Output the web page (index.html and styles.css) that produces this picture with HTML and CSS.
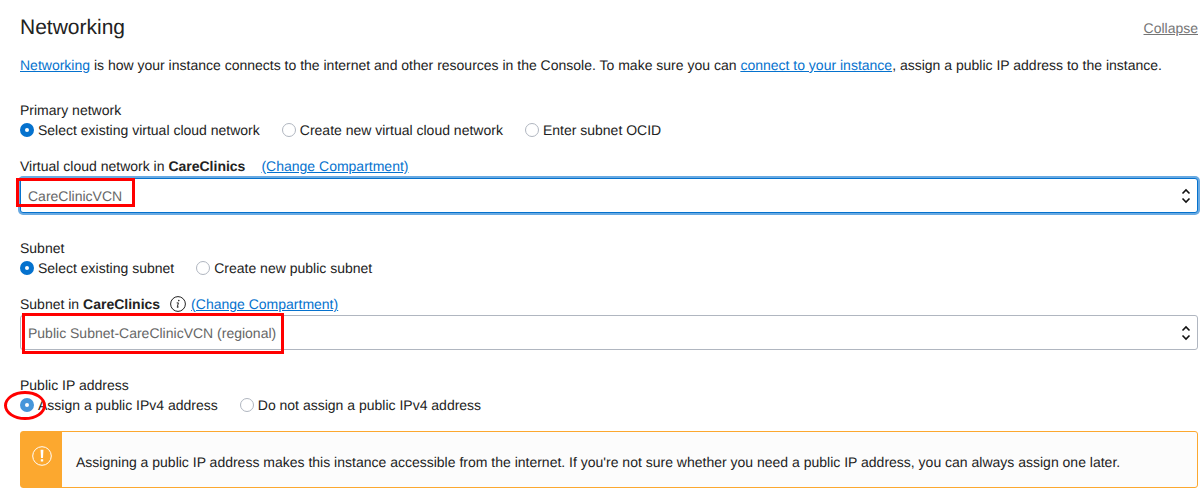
FILE: index.html
```html
<!DOCTYPE html>
<html lang="en">
<head>
<meta charset="utf-8">
<title>Networking</title>
<link rel="stylesheet" href="styles.css">
</head>
<body>
<main class="panel">
  <header class="panel-header">
    <h2 class="title">Networking</h2>
    <a class="collapse" href="#">Collapse</a>
  </header>
  <p class="intro"><a href="#">Networking</a> is how your instance connects to the internet and other resources in the Console. To make sure you can <a href="#">connect to your instance</a>, assign a public IP address to the instance.</p>

  <section class="group">
    <fieldset class="choices">
      <legend>Primary network</legend>
      <div class="options">
        <label class="option"><input type="radio" name="vcn" checked>Select existing virtual cloud network</label>
        <label class="option"><input type="radio" name="vcn">Create new virtual cloud network</label>
        <label class="option"><input type="radio" name="vcn">Enter subnet OCID</label>
      </div>
    </fieldset>
    <div class="field-label">
      <label for="vcn-select">Virtual cloud network in <b>CareClinics</b></label>
      <a class="change" href="#">(Change Compartment)</a>
    </div>
    <div class="select-box">
      <select id="vcn-select" class="select focused"><option>CareClinicVCN</option></select>
      <svg class="arrows" viewBox="0 0 10 16" aria-hidden="true"><path d="M1.5 5.5 5 2l3.5 3.5M1.5 10.5 5 14l3.5-3.5"/></svg>
      <span class="mark mark-vcn"></span>
    </div>
  </section>

  <section class="group">
    <fieldset class="choices">
      <legend>Subnet</legend>
      <div class="options">
        <label class="option"><input type="radio" name="subnet" checked>Select existing subnet</label>
        <label class="option"><input type="radio" name="subnet">Create new public subnet</label>
      </div>
    </fieldset>
    <div class="field-label with-info">
      <label for="subnet-select">Subnet in <b>CareClinics</b></label>
      <button class="info" type="button" aria-label="More information"><svg viewBox="0 0 16 16" aria-hidden="true"><circle cx="8" cy="8" r="7.4"/><path d="M6.7 6.9h1.7l-1.1 4q-.2.8.5.5l.9-.6"/><circle class="dot" cx="8.8" cy="4.6" r=".8"/></svg></button>
      <a href="#">(Change Compartment)</a>
    </div>
    <div class="select-box">
      <select id="subnet-select" class="select"><option>Public Subnet-CareClinicVCN (regional)</option></select>
      <svg class="arrows" viewBox="0 0 10 16" aria-hidden="true"><path d="M1.5 5.5 5 2l3.5 3.5M1.5 10.5 5 14l3.5-3.5"/></svg>
      <span class="mark mark-subnet"></span>
    </div>
  </section>

  <section class="group">
    <fieldset class="choices">
      <legend>Public IP address</legend>
      <div class="options">
        <label class="option"><input class="hovered" type="radio" name="ip" checked>Assign a public IPv4 address</label>
        <label class="option"><input type="radio" name="ip">Do not assign a public IPv4 address</label>
        <span class="mark mark-ip"></span>
      </div>
    </fieldset>
    <div class="alert" role="alert">
      <div class="alert-icon"><svg viewBox="0 0 20 20" aria-hidden="true"><circle cx="10" cy="10" r="9.3"/><path d="M8.6 3.8h2.8l-.4 8.2H9zM8.8 13.3h2.4v2.2H8.8z"/></svg></div>
      <p class="alert-text">Assigning a public IP address makes this instance accessible from the internet. If you're not sure whether you need a public IP address, you can always assign one later.</p>
    </div>
  </section>
</main>
</body>
</html>
```
FILE: styles.css
```css
* { box-sizing: border-box; }

body {
  margin: 0;
  background: #fff;
  color: #222;
  font: 14px/20px "Liberation Sans", Arial, sans-serif;
  text-rendering: geometricPrecision;
}

a { color: #0572ce; text-decoration: underline; }

.panel { padding: 12px 3px 3px 20px; }

.panel-header {
  display: flex;
  align-items: center;
  justify-content: space-between;
}

.title { margin: 0; font-size: 21px; line-height: 32px; font-weight: 400; }

.collapse { color: #757575; }

.intro { margin: 11px 0 0; }

.group { margin-top: 25px; }

.choices { margin: 0; padding: 0; border: 0; min-width: 0; }
.choices legend { padding: 0; }

.options { position: relative; display: flex; gap: 22px; }

.option { display: flex; align-items: center; gap: 4px; }

.option input {
  appearance: none;
  width: 14px;
  height: 14px;
  margin: 0;
  border: 1px solid #b0b6c0;
  border-radius: 50%;
  background: #fff;
}

.option input:checked { border: 5px solid #0572ce; }
.option input.hovered:checked { border-color: #4696da; }

.field-label {
  display: flex;
  align-items: center;
  margin-top: 16px;
  margin-bottom: 2px;
}

.field-label.with-info { margin-bottom: 1px; }

.change { margin-left: 16px; }

.info {
  display: flex;
  margin: 0 5px 0 10px;
  padding: 0;
  border: 0;
  background: none;
}

.info svg { width: 16px; height: 16px; fill: none; stroke: #222; stroke-width: 1; }
.info .dot { fill: #222; stroke: none; }

.select-box { position: relative; }

.select {
  appearance: none;
  display: block;
  width: 100%;
  height: 35px;
  padding: 0 30px 0 7px;
  border: 1px solid #b0b6c0;
  border-radius: 3px;
  background: #fff;
  color: #666;
  font: inherit;
  text-rendering: inherit;
  outline: 0;
}

.select.focused { border-color: #0572ce; box-shadow: 0 0 0 2px #69aae2; }

.arrows {
  position: absolute;
  top: 10px;
  right: 7px;
  width: 10px;
  height: 16px;
  fill: none;
  stroke: #111;
  stroke-width: 1.6;
  pointer-events: none;
}

.mark { position: absolute; border: 3px solid #f00; pointer-events: none; }
.mark-vcn { left: -4px; top: 0; width: 119px; height: 29px; }
.mark-subnet { left: 2px; top: -2px; width: 262px; height: 41px; }
.mark-ip { left: -16px; top: -4px; width: 42px; height: 29px; border-radius: 50%; }

.alert {
  display: flex;
  margin-top: 16px;
  min-height: 57px;
  border: 1px solid #fca82f;
  border-radius: 3px;
  background: #fcfcfc;
}

.alert-icon {
  display: flex;
  justify-content: center;
  flex: none;
  width: 41px;
  padding-top: 14px;
  background: #fca82f;
}

.alert-icon svg { width: 20px; height: 20px; fill: #fff; }
.alert-icon circle { fill: none; stroke: #fff; stroke-width: 1; }

.alert-text { margin: 0; padding: 20px 14px 15px; }
```
